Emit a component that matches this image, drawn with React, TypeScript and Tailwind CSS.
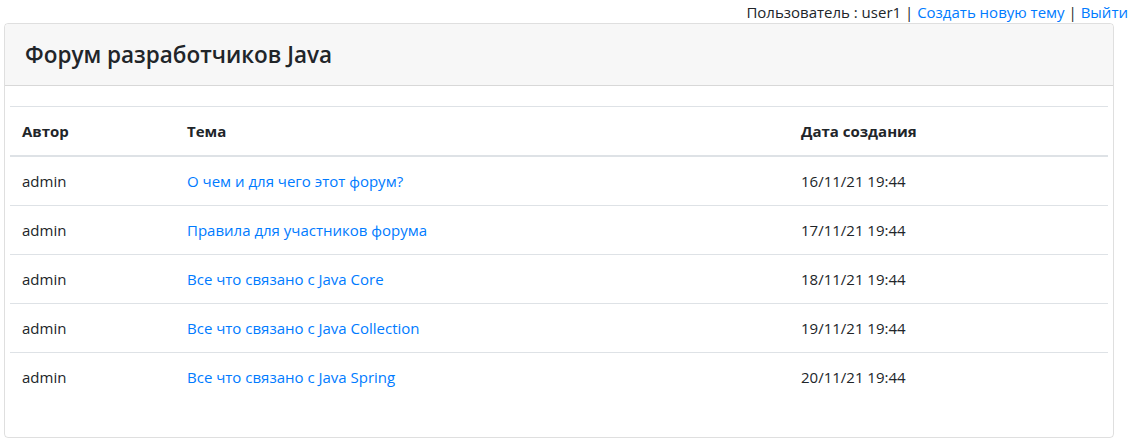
import React from 'react';

const topics = [
  { author: 'admin', title: 'О чем и для чего этот форум?', date: '16/11/21 19:44' },
  { author: 'admin', title: 'Правила для участников форума', date: '17/11/21 19:44' },
  { author: 'admin', title: 'Все что связано с Java Core', date: '18/11/21 19:44' },
  { author: 'admin', title: 'Все что связано с Java Collection', date: '19/11/21 19:44' },
  { author: 'admin', title: 'Все что связано с Java Spring', date: '20/11/21 19:44' },
];

export default function App() {
  return (
    <div className="min-h-[441px] bg-white text-[#212529] font-['Open_Sans',sans-serif] text-[15px] leading-[24px]">
      <div className="flex justify-end pr-[7px] h-[23px] text-[15px] leading-[24px]">
        <span>Пользователь : user1 |&nbsp;</span>
        <a href="#" className="text-[#007bff]">Создать новую тему</a>
        <span>&nbsp;|&nbsp;</span>
        <a href="#" className="text-[#007bff]">Выйти</a>
      </div>

      <div className="ml-[4px] w-[1110px] border border-[rgba(0,0,0,0.125)] rounded-[4px]">
        <div className="bg-[#f7f7f7] border-b border-[rgba(0,0,0,0.125)] px-[20px] py-[12px] rounded-t-[4px]">
          <h4 className="text-[22.5px] leading-[37px] font-semibold">Форум разработчиков Java</h4>
        </div>

        <div className="px-[5px] pt-[20px] pb-[36px]">
          <table className="w-[1098px] border-collapse table-fixed">
            <colgroup>
              <col className="w-[165px]" />
              <col className="w-[614px]" />
              <col className="w-[319px]" />
            </colgroup>
            <thead>
              <tr className="border-t border-[#dee2e6]">
                <th className="text-left font-bold p-[12px] border-b-2 border-[#dee2e6]">Автор</th>
                <th className="text-left font-bold p-[12px] border-b-2 border-[#dee2e6]">Тема</th>
                <th className="text-left font-bold p-[12px] border-b-2 border-[#dee2e6]">Дата создания</th>
              </tr>
            </thead>
            <tbody>
              {topics.map((t, i) => (
                <tr key={t.date} className={i > 0 ? 'border-t border-[#dee2e6]' : ''}>
                  <td className="p-[12px]">{t.author}</td>
                  <td className="p-[12px]">
                    <a href="#" className="text-[#007bff]">{t.title}</a>
                  </td>
                  <td className="p-[12px]">{t.date}</td>
                </tr>
              ))}
            </tbody>
          </table>
        </div>
      </div>
    </div>
  );
}
